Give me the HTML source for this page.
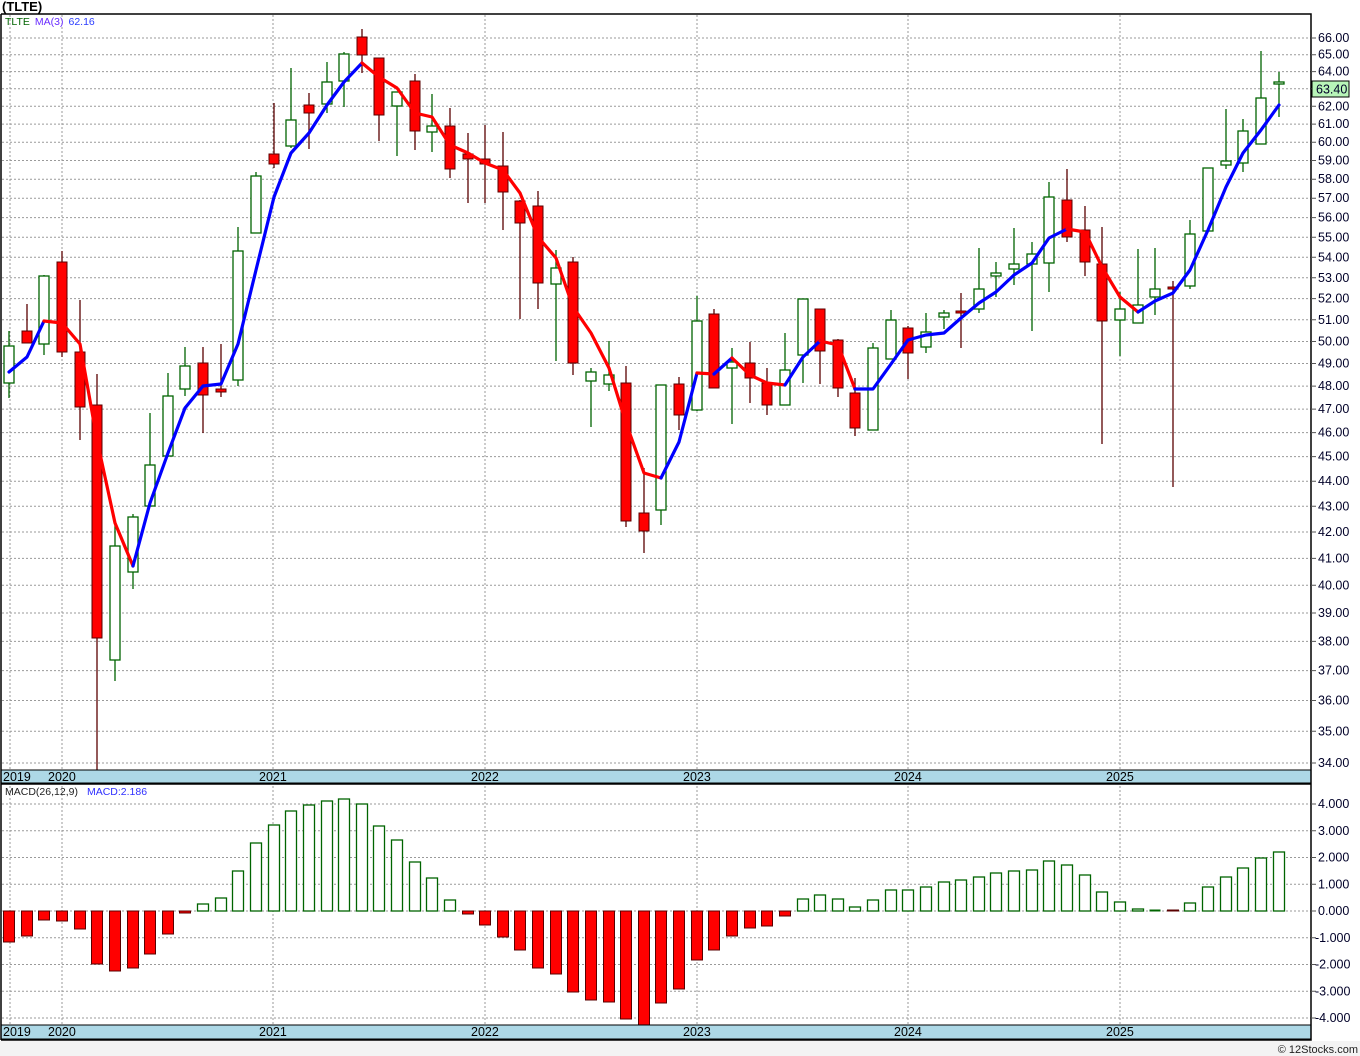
<!DOCTYPE html>
<html><head><meta charset="utf-8"><style>
html,body{margin:0;padding:0;background:#fff;}
svg{display:block;font-family:"Liberation Sans",sans-serif;}
.gd{stroke:#9a9a9a;stroke-width:1;stroke-dasharray:2,2;fill:none}
.gw{stroke:#006400;stroke-width:1.3;fill:none}
.rw{stroke:#5a0000;stroke-width:1.3;fill:none}
.gb{fill:#fff;stroke:#006400;stroke-width:1.3}
.rb{fill:#ff0000;stroke:#5a0000;stroke-width:1}
.ax{font-size:12.5px;fill:#000028}
.yr{font-size:12.5px;fill:#000}
</style></head><body>
<svg width="1360" height="1056" viewBox="0 0 1360 1056" xmlns="http://www.w3.org/2000/svg">
<rect x="0" y="1041" width="1360" height="15" fill="#f3f3f3"/>
<text x="2" y="11" font-size="13" font-weight="bold" fill="#000">(TLTE)</text>

<!-- main grid -->
<g class="gd">
<path d="M2 38H1311M2 54.7H1311M2 71.6H1311M2 88.8H1311M2 106.3H1311M2 124.1H1311M2 142.2H1311M2 160.5H1311M2 179.2H1311M2 198.2H1311M2 217.6H1311M2 237.3H1311M2 257.3H1311M2 277.8H1311M2 298.6H1311M2 319.8H1311M2 341.5H1311M2 363.5H1311M2 386.1H1311M2 409.1H1311M2 432.6H1311M2 456.6H1311M2 481.2H1311M2 506.3H1311M2 532H1311M2 558.4H1311M2 585.3H1311M2 613H1311M2 641.4H1311M2 670.6H1311M2 700.5H1311M2 731.3H1311M2 763H1311"/>
<path d="M10 15V770M62 15V770M273 15V770M485 15V770M697 15V770M908 15V770M1120 15V770"/>
<path d="M2 804H1311M2 830.75H1311M2 857.5H1311M2 884.25H1311M2 911H1311M2 937.75H1311M2 964.5H1311M2 991.25H1311M2 1018H1311"/>
<path d="M10 786V1025M62 786V1025M273 786V1025M485 786V1025M697 786V1025M908 786V1025M1120 786V1025"/>
</g>

<text x="5" y="25" font-size="10.5"><tspan fill="#006400">TLTE</tspan><tspan fill="#6a2cff" dx="5">MA(3)</tspan><tspan fill="#2a3cff" dx="5">62.16</tspan></text>
<text x="5" y="795" font-size="10.5"><tspan fill="#222">MACD(26,12,9)</tspan><tspan fill="#3030ff" dx="9">MACD:2.186</tspan></text>

<!-- wicks -->
<path class="gw" d="M9 331V398M44 275V355M115 522V681M133 514V589M150 413V506M168 373V457M185 347V396M238 227V386M256 172V233M291 68V148M327 62V113M344 52V107M397 92V156M432 94V152M556 250V361M591 368V427M609 341V391M661 385V525M697 296V411M732 348V424M785 333V405M803 299V383M873 343V430M891 310V359M926 313V353M944 310V329M979 248V313M996 262V297M1014 228V285M1032 242V331M1049 182V292M1120 292V356M1138 249V323M1155 248V315M1190 220V289M1208 168V231M1226 109V169M1243 119V172M1261 51V144M1279 72V117"/>
<path class="rw" d="M27 304V343M62 251V357M80 300V440M97 374V770M203 347V433M221 344V397M274 103V168M309 93V149M362 29V73M379 58V141M415 74V150M450 108V178M468 133V203M485 125V203M503 132V230M520 200V319M538 191V309M573 257V375M626 366V527M644 468V553M679 377V430M714 309V388M750 342V403M767 368V415M820 309V384M838 339V397M855 378V436M908 326V379M961 293V348M1067 169V242M1085 206V276M1102 227V444M1173 281V487"/>
<!-- green bodies -->
<g class="gb">
<rect x="4" y="346" width="10" height="37"/><rect x="39" y="276" width="10" height="68"/><rect x="110" y="546" width="10" height="114"/><rect x="128" y="517" width="10" height="55"/><rect x="145" y="465" width="10" height="41"/><rect x="163" y="396" width="10" height="60"/><rect x="180" y="366" width="10" height="23"/><rect x="233" y="251" width="10" height="129"/><rect x="251" y="176" width="10" height="57"/><rect x="286" y="120" width="10" height="26"/><rect x="322" y="82" width="10" height="22"/><rect x="339" y="54" width="10" height="27"/><rect x="392" y="92" width="10" height="14"/><rect x="427" y="126" width="10" height="6"/><rect x="551" y="268" width="10" height="16"/><rect x="586" y="372" width="10" height="9"/><rect x="604" y="375" width="10" height="9"/><rect x="656" y="385" width="10" height="125"/><rect x="692" y="321" width="10" height="89"/><rect x="727" y="362" width="10" height="6"/><rect x="780" y="370" width="10" height="35"/><rect x="798" y="299" width="10" height="56"/><rect x="868" y="348" width="10" height="82"/><rect x="886" y="320" width="10" height="39"/><rect x="921" y="332" width="10" height="15"/><rect x="939" y="313" width="10" height="4"/><rect x="974" y="289" width="10" height="20"/><rect x="991" y="273" width="10" height="3"/><rect x="1009" y="264" width="10" height="5"/><rect x="1027" y="254" width="10" height="10"/><rect x="1044" y="197" width="10" height="66"/><rect x="1115" y="309" width="10" height="11"/><rect x="1133" y="305" width="10" height="18"/><rect x="1150" y="289" width="10" height="8"/><rect x="1185" y="234" width="10" height="52"/><rect x="1203" y="168" width="10" height="63"/><rect x="1221" y="161" width="10" height="4"/><rect x="1238" y="131" width="10" height="32"/><rect x="1256" y="98" width="10" height="46"/><rect x="1274" y="82" width="10" height="2"/>
</g>
<!-- red bodies -->
<g class="rb">
<rect x="22" y="331" width="10" height="12"/><rect x="57" y="262" width="10" height="90"/><rect x="75" y="352" width="10" height="55"/><rect x="92" y="405" width="10" height="233"/><rect x="198" y="363" width="10" height="32"/><rect x="216" y="389" width="10" height="3"/><rect x="269" y="154" width="10" height="10"/><rect x="304" y="105" width="10" height="8"/><rect x="357" y="37" width="10" height="18"/><rect x="374" y="58" width="10" height="57"/><rect x="410" y="81" width="10" height="50"/><rect x="445" y="126" width="10" height="43"/><rect x="463" y="154" width="10" height="5"/><rect x="480" y="159" width="10" height="5"/><rect x="498" y="166" width="10" height="26"/><rect x="515" y="201" width="10" height="22"/><rect x="533" y="206" width="10" height="77"/><rect x="568" y="262" width="10" height="101"/><rect x="621" y="383" width="10" height="138"/><rect x="639" y="513" width="10" height="18"/><rect x="674" y="384" width="10" height="31"/><rect x="709" y="314" width="10" height="74"/><rect x="745" y="363" width="10" height="15"/><rect x="762" y="383" width="10" height="22"/><rect x="815" y="309" width="10" height="42"/><rect x="833" y="340" width="10" height="48"/><rect x="850" y="393" width="10" height="35"/><rect x="903" y="328" width="10" height="25"/><rect x="956" y="311" width="10" height="2"/><rect x="1062" y="200" width="10" height="37"/><rect x="1080" y="230" width="10" height="32"/><rect x="1097" y="264" width="10" height="57"/><rect x="1168" y="287" width="10" height="2"/>
</g>

<!-- MA line -->
<g fill="none" stroke-width="3.2" stroke-linejoin="round" stroke-linecap="round">
<polyline stroke="#0000ff" points="9,372 27,357 44,321"/>
<polyline stroke="#ff0000" points="44,321 62,323 80,344 97,440 115,523 133,566"/>
<polyline stroke="#0000ff" points="133,566 150,503 168,453 185,408 203,386 221,384 238,344 256,270 274,197 291,153 309,133 327,105 344,82 362,63"/>
<polyline stroke="#ff0000" points="362,63 379,77 397,88 415,113 432,117 450,145 468,153 485,163 503,170 520,193 538,237 556,258 573,307 591,333 609,368 626,423 644,473 661,478"/>
<polyline stroke="#0000ff" points="661,478 679,442 697,373"/>
<polyline stroke="#ff0000" points="697,373 714,374"/>
<polyline stroke="#0000ff" points="714,374 732,358"/>
<polyline stroke="#ff0000" points="732,358 750,375 767,383 785,385"/>
<polyline stroke="#0000ff" points="785,385 803,357 820,341"/>
<polyline stroke="#ff0000" points="820,341 838,345 855,389"/>
<polyline stroke="#0000ff" points="855,389 873,389 891,364 908,340 926,335 944,333 961,318 979,303 996,292 1014,275 1032,263 1049,238 1067,229"/>
<polyline stroke="#ff0000" points="1067,229 1085,232 1102,267 1120,297 1138,312"/>
<polyline stroke="#0000ff" points="1138,312 1155,301 1173,293 1190,270 1208,230 1226,187 1243,153 1261,130 1279,105"/>
</g>

<!-- MACD bars red -->
<g class="rb">
<rect x="3.5" y="911" width="11" height="31"/><rect x="21.5" y="911" width="11" height="25"/><rect x="38.5" y="911" width="11" height="9"/><rect x="56.5" y="911" width="11" height="10"/><rect x="74.5" y="911" width="11" height="18"/><rect x="91.5" y="911" width="11" height="53"/><rect x="109.5" y="911" width="11" height="60"/><rect x="127.5" y="911" width="11" height="57"/><rect x="144.5" y="911" width="11" height="43"/><rect x="162.5" y="911" width="11" height="23"/><rect x="179.5" y="911" width="11" height="2"/>
<rect x="462.5" y="911" width="11" height="3"/><rect x="479.5" y="911" width="11" height="14"/><rect x="497.5" y="911" width="11" height="26"/><rect x="514.5" y="911" width="11" height="39"/><rect x="532.5" y="911" width="11" height="57"/><rect x="550.5" y="911" width="11" height="63"/><rect x="567.5" y="911" width="11" height="81"/><rect x="585.5" y="911" width="11" height="89"/><rect x="603.5" y="911" width="11" height="91"/><rect x="620.5" y="911" width="11" height="108"/><rect x="638.5" y="911" width="11" height="114"/><rect x="655.5" y="911" width="11" height="92"/><rect x="673.5" y="911" width="11" height="78"/><rect x="691.5" y="911" width="11" height="49"/><rect x="708.5" y="911" width="11" height="39"/><rect x="726.5" y="911" width="11" height="25"/><rect x="744.5" y="911" width="11" height="17"/><rect x="761.5" y="911" width="11" height="15"/><rect x="779.5" y="911" width="11" height="5"/>
<rect x="1167.5" y="910" width="11" height="1"/>
</g>
<!-- MACD bars green -->
<g class="gb">
<rect x="197.5" y="904" width="11" height="7"/><rect x="215.5" y="898" width="11" height="13"/><rect x="232.5" y="871" width="11" height="40"/><rect x="250.5" y="843" width="11" height="68"/><rect x="268.5" y="825" width="11" height="86"/><rect x="285.5" y="811" width="11" height="100"/><rect x="303.5" y="805" width="11" height="106"/><rect x="321.5" y="801" width="11" height="110"/><rect x="338.5" y="799" width="11" height="112"/><rect x="356.5" y="804" width="11" height="107"/><rect x="373.5" y="826" width="11" height="85"/><rect x="391.5" y="840" width="11" height="71"/><rect x="409.5" y="862" width="11" height="49"/><rect x="426.5" y="878" width="11" height="33"/><rect x="444.5" y="900" width="11" height="11"/>
<rect x="797.5" y="899" width="11" height="12"/><rect x="814.5" y="895" width="11" height="16"/><rect x="832.5" y="899" width="11" height="12"/><rect x="849.5" y="907" width="11" height="4"/><rect x="867.5" y="900" width="11" height="11"/><rect x="885.5" y="890" width="11" height="21"/><rect x="902.5" y="890" width="11" height="21"/><rect x="920.5" y="887" width="11" height="24"/><rect x="938.5" y="882" width="11" height="29"/><rect x="955.5" y="880" width="11" height="31"/><rect x="973.5" y="877" width="11" height="34"/><rect x="990.5" y="873" width="11" height="38"/><rect x="1008.5" y="871" width="11" height="40"/><rect x="1026.5" y="870" width="11" height="41"/><rect x="1043.5" y="861" width="11" height="50"/><rect x="1061.5" y="865" width="11" height="46"/><rect x="1079.5" y="875" width="11" height="36"/><rect x="1096.5" y="892" width="11" height="19"/><rect x="1114.5" y="902" width="11" height="9"/><rect x="1132.5" y="909" width="11" height="2"/><rect x="1184.5" y="903" width="11" height="8"/><rect x="1202.5" y="887" width="11" height="24"/><rect x="1220.5" y="877" width="11" height="34"/><rect x="1237.5" y="868" width="11" height="43"/><rect x="1255.5" y="858" width="11" height="53"/><rect x="1273.5" y="852" width="11" height="59"/>
</g>
<rect x="1149.5" y="909.5" width="11" height="2" fill="#006400"/>

<!-- date bars -->
<rect x="1" y="770" width="1310" height="13" fill="#add8e6" stroke="#000" stroke-width="1"/>
<rect x="1" y="1025" width="1310" height="14" fill="#add8e6" stroke="#000" stroke-width="1"/>
<g class="yr">
<text x="3" y="781">2019</text><text x="48" y="781">2020</text><text x="259" y="781">2021</text><text x="471" y="781">2022</text><text x="683" y="781">2023</text><text x="894" y="781">2024</text><text x="1106" y="781">2025</text>
<text x="3" y="1036">2019</text><text x="48" y="1036">2020</text><text x="259" y="1036">2021</text><text x="471" y="1036">2022</text><text x="683" y="1036">2023</text><text x="894" y="1036">2024</text><text x="1106" y="1036">2025</text>
</g>

<!-- borders -->
<path d="M1 14H1311V1040H1M1 14V1040M1 784H1311" fill="none" stroke="#000" stroke-width="1.5"/>

<!-- right axis -->
<path d="M1311 38h5M1311 54.7h5M1311 71.6h5M1311 88.8h5M1311 106.3h5M1311 124.1h5M1311 142.2h5M1311 160.5h5M1311 179.2h5M1311 198.2h5M1311 217.6h5M1311 237.3h5M1311 257.3h5M1311 277.8h5M1311 298.6h5M1311 319.8h5M1311 341.5h5M1311 363.5h5M1311 386.1h5M1311 409.1h5M1311 432.6h5M1311 456.6h5M1311 481.2h5M1311 506.3h5M1311 532h5M1311 558.4h5M1311 585.3h5M1311 613h5M1311 641.4h5M1311 670.6h5M1311 700.5h5M1311 731.3h5M1311 763h5M1311 804h5M1311 830.75h5M1311 857.5h5M1311 884.25h5M1311 911h5M1311 937.75h5M1311 964.5h5M1311 991.25h5M1311 1018h5" stroke="#555" stroke-width="1"/>
<g class="ax" dominant-baseline="central">
<text x="1318" y="38">66.00</text><text x="1318" y="54.7">65.00</text><text x="1318" y="71.6">64.00</text><text x="1318" y="106.3">62.00</text><text x="1318" y="124.1">61.00</text><text x="1318" y="142.2">60.00</text><text x="1318" y="160.5">59.00</text><text x="1318" y="179.2">58.00</text><text x="1318" y="198.2">57.00</text><text x="1318" y="217.6">56.00</text><text x="1318" y="237.3">55.00</text><text x="1318" y="257.3">54.00</text><text x="1318" y="277.8">53.00</text><text x="1318" y="298.6">52.00</text><text x="1318" y="319.8">51.00</text><text x="1318" y="341.5">50.00</text><text x="1318" y="363.5">49.00</text><text x="1318" y="386.1">48.00</text><text x="1318" y="409.1">47.00</text><text x="1318" y="432.6">46.00</text><text x="1318" y="456.6">45.00</text><text x="1318" y="481.2">44.00</text><text x="1318" y="506.3">43.00</text><text x="1318" y="532">42.00</text><text x="1318" y="558.4">41.00</text><text x="1318" y="585.3">40.00</text><text x="1318" y="613">39.00</text><text x="1318" y="641.4">38.00</text><text x="1318" y="670.6">37.00</text><text x="1318" y="700.5">36.00</text><text x="1318" y="731.3">35.00</text><text x="1318" y="763">34.00</text>
<text x="1318" y="804">4.000</text><text x="1318" y="830.75">3.000</text><text x="1318" y="857.5">2.000</text><text x="1318" y="884.25">1.000</text><text x="1318" y="911">0.000</text><text x="1315" y="937.75">-1.000</text><text x="1315" y="964.5">-2.000</text><text x="1315" y="991.25">-3.000</text><text x="1315" y="1018">-4.000</text>
</g>
<rect x="1312" y="81" width="37" height="16" fill="#b8f5b8" stroke="#000" stroke-width="1"/>
<text x="1316" y="93.5" font-size="12.5" fill="#000028">63.40</text>

<text x="1358" y="1053" font-size="11" fill="#222" text-anchor="end">© 12Stocks.com</text>
</svg>
</body></html>
